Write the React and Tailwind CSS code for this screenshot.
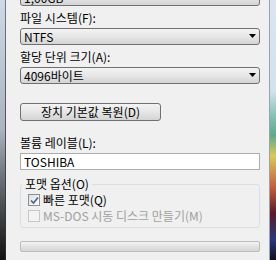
import React from 'react';

const font = { fontFamily: '"Noto Sans CJK KR", "Noto Sans", sans-serif' };

const Arrow = () => (
  <svg width="7" height="5" viewBox="0 0 7 5" className="shrink-0">
    <polygon points="0,0 7,0 3.5,4" fill="#000" />
  </svg>
);

const Combo = ({ value, className = '' }) => (
  <div
    className={`h-[17px] flex items-center justify-between pl-[3px] pr-[3px] border border-[#707070] rounded-[3px] bg-gradient-to-b from-[#f3f3f3] via-[#e6e6e6] to-[#d4d4d4] text-[12px] leading-none text-black ${className}`}
  >
    <span>{value}</span>
    <Arrow />
  </div>
);

const Label = ({ children, className = '' }) => (
  <div className={`h-[16px] leading-[16px] text-[12px] text-black ${className}`}>{children}</div>
);

const Check = ({ checked, disabled, label }) => (
  <div className="h-[16px] flex items-center gap-[3px]">
    <div
      className={`w-[12px] h-[12px] border flex items-center justify-center ${
        disabled
          ? 'border-[#c8c8c8] bg-[#f4f4f4]'
          : 'border-[#8e8f8f] bg-gradient-to-br from-[#dcdcdc] to-[#ffffff]'
      }`}
    >
      {checked && (
        <svg width="9" height="9" viewBox="0 0 9 9">
          <path d="M1 4.5 L3.5 7 L8 1.5" stroke="#4a5f97" strokeWidth="1.6" fill="none" />
        </svg>
      )}
    </div>
    <span className={`text-[12px] leading-[16px] ${disabled ? 'text-[#a0a0a0]' : 'text-black'}`}>{label}</span>
  </div>
);

export default function App() {
  return (
    <div className="w-[276px] h-[260px] overflow-hidden flex bg-[#f0f0f0]" style={font}>
      <div className="w-[6px] h-full flex shrink-0">
        <div className="w-[5px] h-full bg-gradient-to-b from-[#cdd9e6] via-[#a9b4bf] to-[#111111]" />
        <div className="w-[1px] h-full bg-gradient-to-b from-[#6f7b87] to-[#2a2a2a]" />
      </div>

      <div className="flex-1 flex flex-col pl-[14px] pr-[9px]">
        <Combo value="1,00GB" className="-mt-[11px]" />
        <Label className="mt-[4px]">파일 시스템(F):</Label>
        <Combo value="NTFS" className="mt-[2px]" />
        <Label className="mt-[4px]">할당 단위 크기(A):</Label>
        <Combo value="4096바이트" className="mt-[2px]" />

        <button className="mt-[19px] w-[141px] h-[18px] border border-[#707070] rounded-[3px] bg-gradient-to-b from-[#f3f3f3] via-[#e6e6e6] to-[#d4d4d4] text-[12px] leading-none text-black">
          장치 기본값 복원(D)
        </button>

        <Label className="mt-[14px]">볼륨 레이블(L):</Label>
        <div className="mt-[2px] h-[17px] flex items-center pl-[3px] bg-white border border-[#abadb3] text-[12px] leading-none text-black">
          TOSHIBA
        </div>

        <fieldset className="mt-[6px] border border-[#d5dfe5] rounded-[3px] pl-[1px] pb-[3px]">
          <legend className="px-[3px] h-[16px] leading-[16px] text-[12px] text-black">포맷 옵션(O)</legend>
          <div className="pl-[6px] flex flex-col">
            <Check checked label="빠른 포맷(Q)" />
            <Check disabled label="MS-DOS 시동 디스크 만들기(M)" />
          </div>
        </fieldset>

        <div className="mt-[13px] h-[11px] border border-[#bcbcbc] rounded-[2px] bg-gradient-to-b from-[#f4f4f4] via-[#e2e2e2] to-[#d6d6d6]" />
      </div>

      <div className="w-[7px] h-full flex shrink-0">
        <div className="w-[1px] h-full bg-[#9aa3ad]" />
        <div className="w-[6px] h-full bg-[linear-gradient(to_bottom,#dae5f0_0%,#d2e2ec_35%,#8cc2b8_44%,#5ea88e_52%,#d8c95c_60%,#c0603e_72%,#5a1a2a_82%,#2a3a7a_92%,#101020_100%)]" />
      </div>
    </div>
  );
}
